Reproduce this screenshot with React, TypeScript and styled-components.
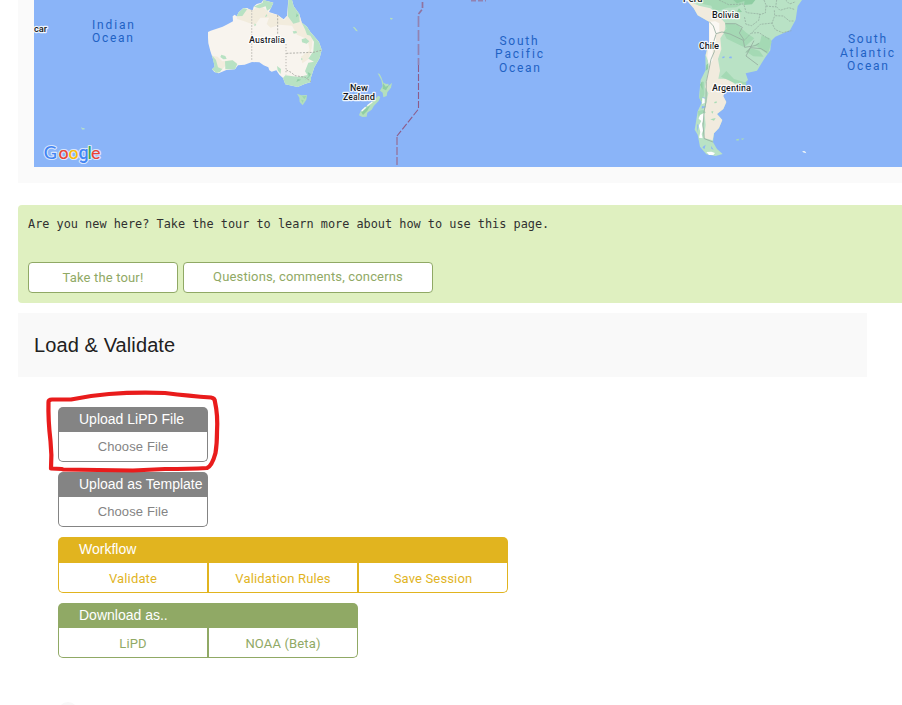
import React from 'react';
import styled, { createGlobalStyle } from 'styled-components';

const GlobalStyle = createGlobalStyle`
  * { box-sizing: border-box; }
  html, body { margin: 0; background: #fff; overflow: hidden; }
  #root { height: 705px; overflow: hidden; }
`;

const GREY = '#848484';
const GOLD = '#e1b41f';
const GREEN = '#90a965';

const Page = styled.main`
  display: flex;
  flex-direction: column;
  width: 902px;
  height: 705px;
  padding-left: 18px;
  overflow: hidden;
  font-family: Roboto, 'Liberation Sans', sans-serif;
`;

const MapCard = styled.section`
  height: 183px;
  flex: none;
  padding-left: 16px;
  background: #fafafa;
`;

const MapSvg = styled.svg`
  display: block;
  background: #8ab4f8;
`;

const OceanLabel = styled.text`
  font: 400 12px Roboto, sans-serif;
  letter-spacing: 2px;
  fill: #1f62c4;
`;

const PlaceLabel = styled.text`
  font: 500 9.3px Roboto, sans-serif;
  fill: #15181c;
  stroke: #fff;
  stroke-opacity: 0.85;
  stroke-width: 2.4px;
  stroke-linejoin: round;
  paint-order: stroke;
`;

const LogoText = styled.text`
  font: 500 18px Lato, sans-serif;
  stroke: #d9e6fc;
  stroke-width: 2.2px;
  stroke-linejoin: round;
  paint-order: stroke;
`;

const TourBanner = styled.section`
  flex: none;
  height: 98px;
  margin-top: 22px;
  padding: 11px 10px 0;
  background: #dff0c0;
  border-radius: 4px 0 0 4px;
`;

const TourMessage = styled.p`
  margin: 0 0 30px;
  height: 16px;
  font: 11.87px/16px 'DejaVu Sans Mono', monospace;
  color: #303030;
  white-space: pre;
`;

const TourActions = styled.div`
  display: flex;
  gap: 5px;
`;

const TourButton = styled.button<{ $width: number; $lift?: number }>`
  width: ${(p) => p.$width}px;
  height: 31px;
  padding: 0 0 ${(p) => p.$lift ?? 0}px;
  border: 1px solid ${GREEN};
  border-radius: 4px;
  background: #fff;
  color: ${GREEN};
  font: 400 13px/${(p) => 29 - (p.$lift ?? 0)}px Roboto, sans-serif;
  letter-spacing: 0.15px;
`;

const SectionHeader = styled.header`
  display: flex;
  align-items: center;
  flex: none;
  width: 849px;
  height: 64px;
  margin-top: 10px;
  padding-left: 16px;
  background: #f9f9f9;
`;

const SectionTitle = styled.h2`
  margin: 0;
  font: 400 20px/28px 'Liberation Sans', sans-serif;
  letter-spacing: 0.1px;
  color: #212121;
`;

const Controls = styled.div`
  position: relative;
  display: flex;
  flex-direction: column;
  align-items: flex-start;
  gap: 10px;
  padding: 30px 0 0 40px;
`;

const Group = styled.div<{ $color: string; $tall?: boolean }>`
  --tone: ${(p) => p.$color};
  height: ${(p) => (p.$tall ? 56 : 55)}px;
`;

const GroupTitle = styled.div<{ $tall?: boolean }>`
  height: ${(p) => (p.$tall ? 26 : 25)}px;
  padding-left: 21px;
  border-radius: 5px 5px 0 0;
  background: var(--tone);
  color: #fff;
  font: 400 14px/25px 'Liberation Sans', sans-serif;
  white-space: nowrap;
`;

const ButtonRow = styled.div`
  display: flex;
`;

const GroupButton = styled.button<{ $arial?: boolean }>`
  width: 150px;
  height: 30px;
  padding: ${(p) => (p.$arial ? 1 : 3)}px 0 0;
  border: 1px solid var(--tone);
  border-top: 0;
  background: #fff;
  color: var(--tone);
  font: 400 13px/${(p) => (p.$arial ? "28px 'Liberation Sans'" : '26px Roboto')}, sans-serif;
  letter-spacing: ${(p) => (p.$arial ? 0.12 : 0.15)}px;
  &:first-child { border-bottom-left-radius: 5px; }
  &:last-child { border-bottom-right-radius: 5px; }
`;

const Highlight = styled.svg`
  position: absolute;
  left: 22px;
  top: 8px;
  pointer-events: none;
`;

const Spinner = styled.div`
  flex: none;
  width: 20px;
  height: 20px;
  margin: 44px 0 0 40px;
  border-radius: 50%;
  background: #f8f8f8;
`;

interface GroupSpec {
  title: string;
  color: string;
  buttons: string[];
  tall?: boolean;
  arial?: boolean;
}

const GROUPS: GroupSpec[] = [
  { title: 'Upload LiPD File', color: GREY, buttons: ['Choose File'], arial: true },
  { title: 'Upload as Template', color: GREY, buttons: ['Choose File'], arial: true },
  { title: 'Workflow', color: GOLD, buttons: ['Validate', 'Validation Rules', 'Save Session'], tall: true },
  { title: 'Download as..', color: GREEN, buttons: ['LiPD', 'NOAA (Beta)'] },
];

const Australia = () => (
  <g transform="translate(200 0) scale(.33333)">
    <path fill="#f8f4ee" d="M24 96L32 92L68 80L84 72L99 64L98 49L104 44L110 49L116 37L130 24L142 24L151 30L158 31L161 20L170 12L184 8L190 0L220 8L213 24L207 36L232 44L251 58L261 47L265 0H276L281 19L298 42L304 67L321 80L331 96L341 107L357 126L365 149L359 174L343 202L333 232L333 246L314 252L293 261L256 253L249 234L238 224L229 211L215 215L208 211L205 202L191 196L178 187L156 186L134 194L114 196L105 208L79 210L56 220L43 216L36 208L44 200L40 180L31 153L25 130L24 113Z" />
    <path fill="#f2ecdd" d="M110 49L142 26L158 31L181 14L207 38L233 45L252 61L263 47L266 27L299 47L309 78L339 108L335 145L325 178L307 190L303 170L329 150L322 117L291 104L276 77L239 74L212 83L200 72L207 53L181 53L165 76L131 63L111 57ZM38 167L53 170L67 184L96 180L112 190L81 192L67 208L53 203Z" />
    <path fill="#b8e2c3" d="M265 0H276L281 19L298 42L299 66L280 71L263 48ZM161 20L188 8L190 0L220 8L213 25L201 32L197 19L178 25ZM110 49L116 37L131 24L142 27L127 48ZM304 67L321 80L331 96L341 107L357 126L365 149L359 174L343 202L333 232L333 246L314 252L293 261L256 253L249 234L256 226L297 231L322 225L315 214L325 188L342 185L325 176L340 154L342 125L331 107L321 104L315 88ZM36 166L48 180L54 202L67 207L60 216L49 219L36 208L44 200ZM75 184L98 181L112 192L105 208L76 208ZM64 164L76 168L80 177L70 178L61 171ZM231 198L243 207L242 222L233 211ZM305 118L317 114L328 124L320 131L306 127ZM278 94L289 93L291 99L281 101ZM199 42L202 48L195 52ZM303 174L309 177L304 181ZM164 70L169 75L163 79Z" />
    <path fill="#92d0a7" d="M290 40L295 47L288 52ZM323 216L333 222L327 232L314 240L326 229ZM293 237L304 239L289 246Z" />
    <path fill="#b4dfbd" d="M291 281L304 286L321 285L319 299L308 316L299 306L298 293Z" />
    <path fill="#9dd6ae" d="M306 289L319 288L313 298ZM303 299L311 300L308 309Z" />
    <path stroke="#c9c6c0" strokeWidth="4" strokeDasharray="4 5" fill="none" d="M155 31V184M258 132V223" />
    <path stroke="#a3a39e" strokeWidth="2.5" strokeDasharray="6 4" fill="none" d="M233 45V132M259 160L341 157L366 150M259 210L273 217L285 227L316 232L333 245" />
    <path fill="#b4dfbd" d="M458 80L464 82L474 94L468 93ZM571 53L579 55L575 59L570 57ZM533 220L539 222L544 232L550 248L559 252L565 251L566 258L576 248L573 263L562 277L560 288L550 292L548 278L540 272L548 258L544 240ZM535 287L541 291L536 303L522 317L515 329L502 338L500 350L487 351L477 346L481 335L499 319L516 306Z" />
    <path fill="#8fcea3" d="M549 249L557 260L567 256L558 271L548 266ZM484 337L502 322L511 316L502 332L489 345Z" />
    <path stroke="#f8fbf5" strokeWidth="4" fill="none" d="M485 333L497 322M502 317L517 306" />
  </g>
);

const SouthAmerica = () => (
  <g transform="translate(660 0) scale(.33333)">
    <path fill="#b9e2c5" d="M79 0H426L413 19L407 59L390 91L346 110L333 123L331 151L315 173L291 212L257 220L264 240L248 255L198 258L187 288L199 306L190 327L171 342L187 360L177 384L162 400L159 427L171 447L188 462L167 468L139 463L120 440L113 404L104 389L108 365L113 334L125 308L117 292L122 240L137 210L136 166L147 127L147 65L113 46L101 25Z" />
    <path fill="#f1ebde" d="M79 0L117 17L151 25L169 39L196 70L194 95L181 115L184 148L174 177L180 212L175 236L205 237L233 258L195 278L190 288L199 306L190 327L171 342L187 360L177 384L162 400L158 421L132 414L137 375L133 335L145 280L135 261L145 212L147 188L137 166L147 127L147 65L113 46L101 25Z" />
    <path fill="#fbf8f4" d="M148 65L166 64L178 70L178 95L165 104L169 123L158 133L158 181L146 198L142 169L148 126Z" />
    <path fill="#a4d9b4" d="M108 0L129 12L154 17L159 29L180 31L202 23L229 22L250 11L254 0ZM195 70L231 73L259 98L283 115L253 142L200 116L190 96L200 86ZM305 105L330 115L335 126L323 163L290 139L278 137L300 127ZM257 154L273 145L298 152L311 170L280 169ZM118 294L123 246L132 245L133 282L125 305ZM114 333L130 330L137 337L130 346L115 350ZM183 230L199 213L222 237L260 248L257 256L225 250Z" />
    <path fill="#8fcea3" d="M220 0L231 10L253 3L252 15L276 13L286 0ZM120 254L127 244L128 270ZM139 195L145 190L144 207L137 212ZM237 25L246 36L230 37Z" />
    <path fill="#8ab4f8" d="M154 38L159 44L163 51L157 47ZM187 170L194 169L193 174L187 175ZM207 171L214 169L216 175L208 175ZM127 292L139 294L128 297ZM126 318L139 320L125 326ZM127 442L137 434L133 448ZM112 372L116 376L112 397ZM153 438L161 449L154 446Z" />
    <path fill="#fff" d="M127 293L134 296V309L126 312ZM120 345L133 338L132 356L126 371L130 389L125 402L128 415L117 413L121 396L116 377L124 363L116 356ZM139 456L154 455L165 459L160 465L147 465Z" />
    <path fill="none" stroke="#93ab9d" strokeWidth="2.4" d="M148 65L160 78L168 101L186 96L210 102L250 121L254 142L286 137L297 130M196 71L227 71L247 82L238 99L253 121M168 103L161 125L163 155L153 178L146 213L139 245L138 306L132 336L129 378L133 416L159 426M282 122L258 168L294 195M258 158L272 143L303 146L321 157" />
    <path fill="none" stroke="#93ab9d" strokeWidth="2.2" strokeDasharray="6 3" d="M177 0L206 14L251 12L259 38L300 42L296 61L275 77L258 73L253 49M312 0L318 15L316 39L298 44M318 18L347 21L350 0M349 20L360 31L387 23L405 29M343 31L344 47L370 48L388 63L402 63M343 50L336 70L346 89L368 98L394 92M338 69L301 73L275 99L297 98L328 118M377 0L389 12L407 5M274 99L253 121" />
    <path fill="#a9dcb5" d="M229 418L238 416L235 422L228 421ZM242 416L253 415L248 420Z" />
    <path fill="#f8fbf6" d="M427 453L435 454L439 460L429 457Z" />
    <path fill="#a9dcb5" d="M163 306L170 304L170 309L163 310ZM153 335L160 333L158 341ZM151 358L167 354L162 362Z" />
  </g>
);

const WorldMap = () => (
  <MapSvg width="868" height="167" viewBox="34 0 868 167" role="img" aria-label="Map">
    <Australia />
    <SouthAmerica />
    <path d="M81 127L82.5 128H84.5V129.5H82Z" fill="#b4dfca" />
    <g fill="none" stroke="#9282b1" strokeWidth="1.7">
      <path d="M422.5 2V9L418.5 14" strokeDasharray="6 2" stroke="#90739f" />
      <path d="M418.5 16V65" strokeDasharray="11 3" />
      <path d="M418.5 65V109L397 136" strokeDasharray="7 2" stroke="#8d5b88" strokeWidth="1.1" />
      <path d="M397 137V167" strokeDasharray="8 2" />
      <path d="M471 .5H486" strokeDasharray="5 2" strokeWidth="2" />
    </g>
    <OceanLabel x="92" y="29.400" textLength="44">Indian</OceanLabel>
    <OceanLabel x="92" y="42.400" textLength="43">Ocean</OceanLabel>
    <OceanLabel x="499.500" y="45.400" textLength="40">South</OceanLabel>
    <OceanLabel x="495" y="58.400" textLength="50">Pacific</OceanLabel>
    <OceanLabel x="499" y="72.400" textLength="43">Ocean</OceanLabel>
    <OceanLabel x="848" y="43.400" textLength="40">South</OceanLabel>
    <OceanLabel x="840" y="57.400" textLength="56">Atlantic</OceanLabel>
    <OceanLabel x="847" y="70.400" textLength="43">Ocean</OceanLabel>
    <PlaceLabel x="34" y="32.300">car</PlaceLabel>
    <PlaceLabel x="249" y="43.300" textLength="36">Australia</PlaceLabel>
    <PlaceLabel x="350" y="91.300" textLength="18">New</PlaceLabel>
    <PlaceLabel x="343" y="100.300" textLength="32">Zealand</PlaceLabel>
    <PlaceLabel x="683" y="1.800">Peru</PlaceLabel>
    <PlaceLabel x="712" y="18.300" textLength="27">Bolivia</PlaceLabel>
    <PlaceLabel x="699" y="49.300" textLength="20">Chile</PlaceLabel>
    <PlaceLabel x="712" y="91.300" textLength="39">Argentina</PlaceLabel>
    <LogoText y="159">
      <tspan x="43.800" fill="#4285f4" stroke="#d9e6fc">G</tspan>
      <tspan x="58.500" fill="#ea4335">o</tspan>
      <tspan x="68.500" fill="#fbbc04">o</tspan>
      <tspan x="78.600" fill="#4285f4" fontFamily="Roboto">g</tspan>
      <tspan x="87.600" fill="#34a853">l</tspan>
      <tspan x="91" fill="#ea4335">e</tspan>
    </LogoText>
  </MapSvg>
);

export default function App() {
  return (
    <>
      <GlobalStyle />
      <Page>
        <MapCard>
          <WorldMap />
        </MapCard>
        <TourBanner>
          <TourMessage>Are you new here? Take the tour to learn more about how to use this page.</TourMessage>
          <TourActions>
            <TourButton $width={150}>Take the tour!</TourButton>
            <TourButton $width={250} $lift={2}>Questions, comments, concerns</TourButton>
          </TourActions>
        </TourBanner>
        <SectionHeader>
          <SectionTitle>Load &amp; Validate</SectionTitle>
        </SectionHeader>
        <Controls>
          {GROUPS.map((g) => (
            <Group key={g.title} $color={g.color} $tall={g.tall}>
              <GroupTitle $tall={g.tall}>{g.title}</GroupTitle>
              <ButtonRow>
                {g.buttons.map((b) => (
                  <GroupButton key={b} $arial={g.arial}>{b}</GroupButton>
                ))}
              </ButtonRow>
            </Group>
          ))}
          <Highlight width="184" height="92" viewBox="40 385 184 92">
            <path
              d="M62 469L51 468.500Q52 455 50.500 441Q48 420 48.500 402Q48.500 399.500 52 399.500H71Q90 395.500 109 394Q135 392 165 393Q190 396 211 397.500Q215 398 215 402Q218 415 217 432Q217 444 215.500 453Q212 466 207 468Q190 469 165 469Q143 470 133 470.500L63 469.500"
              fill="none"
              stroke="#e91c1c"
              strokeWidth="4.2"
              strokeLinecap="round"
              strokeLinejoin="round"
            />
          </Highlight>
        </Controls>
        <Spinner />
      </Page>
    </>
  );
}
